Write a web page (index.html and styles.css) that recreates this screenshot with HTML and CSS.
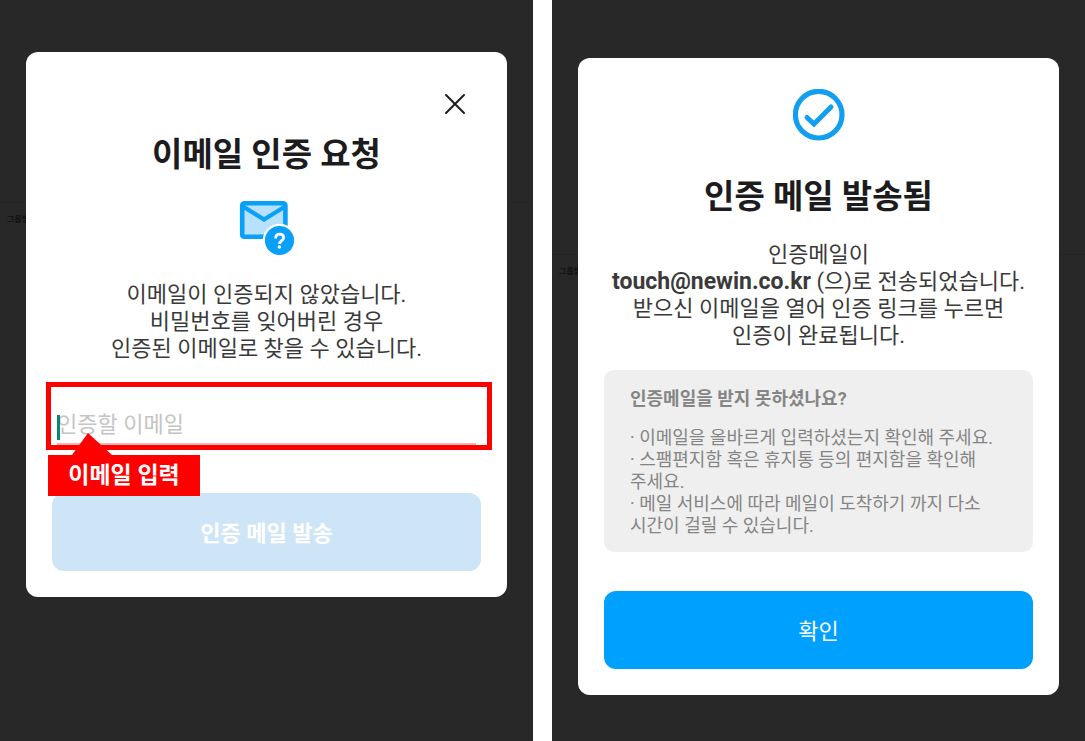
FILE: index.html
```html
<!DOCTYPE html>
<html lang="ko">
<head>
  <meta charset="UTF-8" />
  <meta name="viewport" content="width=device-width, initial-scale=1" />
  <title>이메일 인증</title>
  <link rel="stylesheet" href="styles.css">
</head>
<body>
  <main>
    <section class="screen request">
      <span class="behind">그룹방</span>
      <form class="card">
        <button type="button" class="close" aria-label="닫기">
          <svg width="22" height="22" viewBox="0 0 22 22" fill="none" stroke="#1c1c1e" stroke-width="2" stroke-linecap="round">
            <path d="M2 2l18 18M20 2L2 20" />
          </svg>
        </button>
        <h1>이메일 인증 요청</h1>
        <svg class="icon" width="56" height="56" viewBox="0 0 56 56">
          <rect x="3.2" y="3.2" width="43.2" height="33.6" rx="2" fill="#b8e1fd" stroke="#08a0f8" stroke-width="4.6" />
          <path d="M4 6.5l21 13L46 6.5" fill="none" stroke="#08a0f8" stroke-width="4.2" />
          <circle cx="40.5" cy="40.5" r="16.8" fill="#fff" />
          <circle cx="40.5" cy="40.5" r="14.6" fill="#08a0f8" />
          <path d="M36.6 38.4c0-2.8 1.7-4.3 4-4.3 2.4 0 4 1.3 4 3.4 0 3.2-4 3-4 6.4" fill="none" stroke="#fff" stroke-width="2.8" />
          <circle cx="40.4" cy="47" r="1.8" fill="#fff" />
        </svg>
        <p class="message">이메일이 인증되지 않았습니다.<br>비밀번호를 잊어버린 경우<br>인증된 이메일로 찾을 수 있습니다.</p>

        <div class="highlight">
          <input type="email" id="email" placeholder="인증할 이메일" />
          <span class="caret"></span>
          <label class="callout" for="email">이메일 입력</label>
        </div>

        <button type="submit" class="action" disabled>인증 메일 발송</button>
      </form>
    </section>

    <section class="screen sent">
      <span class="behind">그룹방</span>
      <div class="card">
        <svg class="icon" width="52" height="52" viewBox="0 0 52 52" fill="none" stroke="#129ff0">
          <circle cx="25.7" cy="25.7" r="23.3" stroke-width="5.2" />
          <path d="M14 28.5l7 6.5L38 18" stroke-width="5" stroke-linecap="round" />
        </svg>
        <h1>인증 메일 발송됨</h1>
        <p class="message">인증메일이<br><strong>touch@newin.co.kr</strong> (으)로 전송되었습니다.<br>받으신 이메일을 열어 인증 링크를 누르면<br>인증이 완료됩니다.</p>

        <div class="notice">
          <h2>인증메일을 받지 못하셨나요?</h2>
          <ul>
            <li>· 이메일을 올바르게 입력하셨는지 확인해 주세요.</li>
            <li>· 스팸편지함 혹은 휴지통 등의 편지함을 확인해 주세요.</li>
            <li>· 메일 서비스에 따라 메일이 도착하기 까지 다소 시간이 걸릴 수 있습니다.</li>
          </ul>
        </div>

        <button type="button" class="action">확인</button>
      </div>
    </section>
  </main>
</body>
</html>
```
FILE: styles.css
```css
* {
  box-sizing: border-box;
}

body {
  margin: 0;
  font-family: Roboto, "Noto Sans CJK KR", sans-serif;
  background-color: #fff;
  color: #3a3a3a;
  word-break: keep-all;
}

main {
  display: grid;
  grid-template-columns: 1fr 1fr;
  gap: 19px;
  min-height: 100vh;
}

.screen {
  position: relative;
  background-color: #282828;
  padding: 52px 26px;
}

.sent {
  padding-top: 58px;
  padding-bottom: 40px;
}

/* page content dimmed behind the dialog */
.behind {
  position: absolute;
  left: 0;
  top: 202px;
  width: 100%;
  padding: 11px 7px;
  border-top: 1px solid #242424;
  font-size: 8px;
  line-height: 12px;
  font-weight: bold;
  color: #111;
}

.sent .behind {
  top: 254px;
}

.card {
  position: relative;
  display: flex;
  flex-direction: column;
  padding: 31px 26px 26px;
  background-color: #fff;
  border-radius: 12px;
}

.request .card {
  padding-top: 37px;
}

button {
  font-family: inherit;
  border: none;
  padding: 0;
}

.close {
  align-self: flex-end;
  display: flex;
  align-items: center;
  justify-content: center;
  width: 30px;
  height: 30px;
  margin-right: 11px;
  background: none;
}

.icon {
  align-self: center;
}

h1 {
  margin: 36px 0 0;
  font-size: 33px;
  line-height: 40px;
  text-align: center;
  color: #1c1c1e;
}

.request h1 {
  margin: 16px 0 25px;
}

.message {
  margin: 25px 0 0;
  font-size: 22px;
  line-height: 27px;
  text-align: center;
}

.sent .message {
  margin-top: 24px;
}

.message strong {
  font-size: 23px;
}

.highlight {
  position: relative;
  margin: 20px -11px 0 -6px;
  padding: 19px 11px 0 6px;
  height: 68px;
  border: 5px solid #f00;
}

input {
  display: block;
  width: 100%;
  height: 39px;
  padding: 0;
  border: none;
  border-bottom: 2px solid #f5b5b5;
  outline: none;
  font-family: inherit;
  font-size: 22px;
  color: #3a3a3a;
}

input::placeholder {
  color: #c4c4c4;
}

.caret {
  position: absolute;
  left: 6px;
  top: 28px;
  width: 3px;
  height: 25px;
  background-color: #0a8573;
}

.callout {
  position: absolute;
  left: -3px;
  top: 68px;
  width: 152px;
  font-size: 23px;
  line-height: 41px;
  font-weight: bold;
  text-align: center;
  color: #fff;
  background-color: #f00;
}

.callout::before {
  content: "";
  position: absolute;
  left: 24px;
  bottom: 100%;
  width: 40px;
  height: 22px;
  background-color: #f00;
  clip-path: polygon(40% 0, 100% 100%, 0 100%);
}

.action {
  height: 78px;
  margin-top: 39px;
  padding-bottom: 2px;
  font-size: 22px;
  color: #fff;
  background-color: #00a0ff;
  border-radius: 12px;
}

.action:disabled {
  margin-top: 43px;
  font-weight: bold;
  background-color: #cde5f7;
}

.notice {
  margin-top: 21px;
  padding: 18px 26px 15px;
  font-size: 18px;
  line-height: 22px;
  color: #858585;
  background-color: #efefef;
  border-radius: 10px;
}

.notice h2 {
  margin: 0 0 17px;
  font-size: 18px;
}

.notice ul {
  margin: 0;
  padding: 0;
  list-style: none;
}

@media (max-width: 900px) {
  main {
    grid-template-columns: 1fr;
  }
}
```
